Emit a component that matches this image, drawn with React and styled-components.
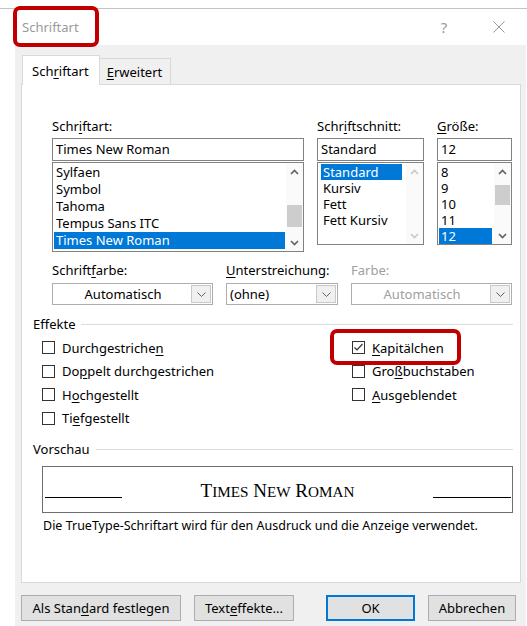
import React from 'react'
import styled, { createGlobalStyle, css } from 'styled-components'

const GlobalStyle = createGlobalStyle`
  html, body {
    margin: 0;
    padding: 0;
    background: #fff;
  }
  body {
    font-family: "Noto Sans", "Open Sans", sans-serif;
    font-size: 13px;
    color: #000;
  }
  #root {
    width: 527px;
    height: 626px;
    overflow: hidden;
  }
`

// red annotation frame drawn over a part of the dialog
const marker = css`
  &::after {
    content: '';
    position: absolute;
    box-sizing: border-box;
    border: 4px solid #c00000;
    border-radius: 7px;
    pointer-events: none;
  }
`

const Window = styled.div`
  margin-top: 8px;
  height: 618px;
  border-top: 1px solid #c4c4c4;
  display: flex;
  flex-direction: column;
`

const TitleBar = styled.div`
  height: 36px;
  display: flex;
  align-items: center;
  padding: 0 22px 0 22px;
  background: #fff;
`

const TitleText = styled.span`
  position: relative;
  flex: 1;
  color: #9a9a9a;
  line-height: 16px;
  ${marker}
  &::after {
    left: -9px;
    top: -13px;
    width: 86px;
    height: 41px;
  }
`

const TitleButton = styled.span`
  width: 12px;
  display: flex;
  justify-content: center;
  color: #9a9a9a;
  font-size: 15px;
  margin-left: ${p => p.$gap || 0}px;
`

const Body = styled.div`
  flex: 1;
  margin: 0 1px 0 15px;
  background: #f0f0f0;
  padding: 10px 5px 0 6px;
  display: flex;
  flex-direction: column;
`

const TabRow = styled.div`
  display: flex;
  align-items: flex-end;
  height: 30px;
  margin-bottom: -1px;
  padding-left: 1px;
`

const Tab = styled.div`
  position: relative;
  box-sizing: border-box;
  display: flex;
  align-items: center;
  border: 1px solid #d9d9d9;
  ${p => p.$active
    ? css`
      height: 30px;
      padding: 0 10px 0 9px;
      background: #fff;
      border-bottom: none;
      z-index: 1;
    `
    : css`
      height: 27px;
      padding: 0 8px 0 7px;
      background: #f0f0f0;
      border-left: none;
    `}
`

const Panel = styled.div`
  box-sizing: border-box;
  height: 499px;
  background: #fff;
  border: 1px solid #d9d9d9;
  padding: 0 7px 0 11px;
  display: flex;
  flex-direction: column;
`

const Acc = styled.span`
  text-decoration: underline;
  text-underline-offset: 2px;
  text-decoration-thickness: 1px;
`

const PickerGrid = styled.div`
  display: grid;
  grid-template-columns: 252px 107px 75px;
  column-gap: 13px;
  margin: 33px 0 0 19px;
  align-items: start;
`

const Field = styled.div`
  display: flex;
  flex-direction: column;
`

const Label = styled.div`
  line-height: 16px;
  margin-bottom: ${p => p.$gap ?? 4}px;
  color: ${p => (p.$disabled ? '#a0a0a0' : '#000')};
  white-space: nowrap;
`

const TextBox = styled.div`
  box-sizing: border-box;
  height: 23px;
  border: 1px solid #828282;
  background: #fff;
  padding: 0 3px;
  line-height: 21px;
`

const List = styled.div`
  box-sizing: border-box;
  margin-top: 1px;
  height: ${p => p.$height}px;
  border: 1px solid #828282;
  background: #fff;
  display: flex;
`

const Rows = styled.div`
  flex: 1;
  padding: 1px ${p => p.$inset[1]}px 0 ${p => p.$inset[0]}px;
  overflow: hidden;
`

const Row = styled.div`
  height: ${p => p.$h}px;
  line-height: ${p => p.$h}px;
  padding-left: 2px;
  white-space: nowrap;
  overflow: hidden;
  ${p => p.$selected && css`
    background: #0078d7;
    color: #fff;
  `}
`

const ScrollTrack = styled.div`
  width: 17px;
  background: #fafafa;
  display: flex;
  flex-direction: column;
`

const ArrowCell = styled.div`
  height: 17px;
  display: flex;
  align-items: center;
  justify-content: center;
  ${p => p.$end && 'margin-top: auto;'}
`

const Thumb = styled.div`
  margin: ${p => p.$offset}px 1px 0;
  height: ${p => p.$size}px;
  background: #cdcdcd;
`

const ComboGrid = styled.div`
  display: grid;
  grid-template-columns: 161px 112px 161px;
  column-gap: 13px;
  margin: 10px 0 0 19px;
`

const Combo = styled.div`
  box-sizing: border-box;
  height: 22px;
  border: 1px solid #adadad;
  background: #fff;
  display: flex;
  color: ${p => (p.$disabled ? '#a0a0a0' : '#000')};
`

const ComboValue = styled.div`
  flex: 1;
  line-height: 20px;
  text-align: ${p => (p.$center ? 'center' : 'left')};
  padding-left: 3px;
`

const ComboButton = styled.div`
  width: 18px;
  margin: 1px;
  border: 1px solid #c9c9c9;
  background: #f0f0f0;
  display: flex;
  align-items: center;
  justify-content: center;
`

const GroupTitle = styled.div`
  display: flex;
  align-items: center;
  gap: 6px;
  line-height: 16px;
  margin-top: ${p => p.$top}px;

  &::after {
    content: '';
    flex: 1;
    height: 1px;
    background: #dcdcdc;
  }
`

const CheckGrid = styled.div`
  display: grid;
  grid-template-columns: 310px auto;
  grid-template-rows: repeat(4, 23.5px);
  grid-auto-flow: column;
  margin: 4px 0 0 9px;
`

const CheckRow = styled.div`
  position: relative;
  display: flex;
  align-items: center;
  gap: 7px;
  ${p => p.$marked && css`
    ${marker}
    &::after {
      left: -22px;
      top: -7px;
      width: 131px;
      height: 36px;
    }
  `}
`

const Box = styled.span`
  box-sizing: border-box;
  width: 13px;
  height: 13px;
  border: 1px solid #333;
  background: #fff;
  display: flex;
`

const PreviewBox = styled.div`
  box-sizing: border-box;
  height: 47px;
  margin: 9px 0 0 9px;
  border: 1px solid #6e6e6e;
  display: flex;
  align-items: center;
  justify-content: space-between;
  padding: 0 1px 0 2px;
`

const PreviewLine = styled.span`
  width: ${p => p.$w}px;
  height: 1px;
  background: #000;
  margin-top: 16px;
`

const PreviewText = styled.span`
  font-family: "Liberation Serif", "Times New Roman", serif;
  font-size: 19px;
  margin-top: 2px;
`

// small capitals at 80% of the cap size
const SmallCaps = styled.span`
  font-size: 0.8em;
  text-transform: uppercase;
`

const Note = styled.div`
  margin: 5px 0 0 10px;
  font-size: 12.5px;
  line-height: 16px;
  white-space: nowrap;
`

const ButtonRow = styled.div`
  display: flex;
  gap: 13px;
  margin: 12px 5px 0 0;
`

const Button = styled.div`
  box-sizing: border-box;
  height: 26px;
  width: ${p => p.$w}px;
  display: flex;
  align-items: center;
  justify-content: center;
  background: #e1e1e1;
  border: 1px solid #adadad;
  ${p => p.$push && 'margin-left: auto;'}
  ${p => p.$default && css`
    border-color: #0078d7;
    box-shadow: inset 0 0 0 1px #0078d7;
  `}
`

function Chevron({ down, color = '#606060' }) {
  return (
    <svg width="9" height="6" viewBox="0 0 9 6">
      <polyline
        points={down ? '1,1 4.5,4.5 8,1' : '1,5 4.5,1.5 8,5'}
        fill="none"
        stroke={color}
        strokeWidth="1.6"
      />
    </svg>
  )
}

function ComboChevron() {
  return (
    <svg width="9" height="5" viewBox="0 0 9 5">
      <polyline points="0.5,0.5 4.5,4.5 8.5,0.5" fill="none" stroke="#606060" strokeWidth="1" />
    </svg>
  )
}

function CloseGlyph() {
  return (
    <svg width="12" height="12" viewBox="0 0 12 12">
      <path d="M0.5 0.5 L11.5 11.5 M11.5 0.5 L0.5 11.5" stroke="#9a9a9a" strokeWidth="1" />
    </svg>
  )
}

function CheckGlyph() {
  return (
    <svg width="11" height="11" viewBox="0 0 11 11">
      <polyline points="1.5,5.5 4,8 9.5,2" fill="none" stroke="#333" strokeWidth="1.2" />
    </svg>
  )
}

function ListBox({ items, selected, rowHeight, height, inset, thumb, disabled }) {
  const arrow = disabled ? '#c8c8c8' : '#606060'
  return (
    <List $height={height}>
      <Rows $inset={inset}>
        {items.map(item => (
          <Row key={item} $h={rowHeight} $selected={item === selected}>{item}</Row>
        ))}
      </Rows>
      <ScrollTrack>
        <ArrowCell><Chevron color={arrow} /></ArrowCell>
        {thumb && <Thumb $offset={thumb[0]} $size={thumb[1]} />}
        <ArrowCell $end><Chevron down color={arrow} /></ArrowCell>
      </ScrollTrack>
    </List>
  )
}

function Check({ checked, marked, children }) {
  return (
    <CheckRow $marked={marked}>
      <Box>{checked && <CheckGlyph />}</Box>
      <span>{children}</span>
    </CheckRow>
  )
}

export default function App() {
  return (
    <>
      <GlobalStyle />
      <Window>
        <TitleBar>
          <TitleText>Schriftart</TitleText>
          <TitleButton>?</TitleButton>
          <TitleButton $gap={43}><CloseGlyph /></TitleButton>
        </TitleBar>

        <Body>
          <TabRow>
            <Tab $active>Sch<Acc>r</Acc>iftart</Tab>
            <Tab><Acc>E</Acc>rweitert</Tab>
          </TabRow>

          <Panel>
            <PickerGrid>
              <Field>
                <Label>Schr<Acc>i</Acc>ftart:</Label>
                <TextBox>Times New Roman</TextBox>
                <ListBox
                  items={['Sylfaen', 'Symbol', 'Tahoma', 'Tempus Sans ITC', 'Times New Roman']}
                  selected="Times New Roman"
                  rowHeight={17}
                  height={90}
                  inset={[1, 1]}
                  thumb={[25, 22]}
                />
              </Field>
              <Field>
                <Label>Schr<Acc>i</Acc>ftschnitt:</Label>
                <TextBox>Standard</TextBox>
                <ListBox
                  items={['Standard', 'Kursiv', 'Fett', 'Fett Kursiv']}
                  selected="Standard"
                  rowHeight={16}
                  height={83}
                  inset={[3, 4]}
                  disabled
                />
              </Field>
              <Field>
                <Label><Acc>G</Acc>röße:</Label>
                <TextBox>12</TextBox>
                <ListBox
                  items={['8', '9', '10', '11', '12']}
                  selected="12"
                  rowHeight={16}
                  height={83}
                  inset={[1, 2]}
                  thumb={[5, 20]}
                />
              </Field>
            </PickerGrid>

            <ComboGrid>
              <Field>
                <Label $gap={5}>Schrift<Acc>f</Acc>arbe:</Label>
                <Combo>
                  <ComboValue $center>Automatisch</ComboValue>
                  <ComboButton><ComboChevron /></ComboButton>
                </Combo>
              </Field>
              <Field>
                <Label $gap={5}><Acc>U</Acc>nterstreichung:</Label>
                <Combo>
                  <ComboValue>(ohne)</ComboValue>
                  <ComboButton><ComboChevron /></ComboButton>
                </Combo>
              </Field>
              <Field>
                <Label $gap={5} $disabled>Farbe:</Label>
                <Combo $disabled>
                  <ComboValue $center>Automatisch</ComboValue>
                  <ComboButton><ComboChevron /></ComboButton>
                </Combo>
              </Field>
            </ComboGrid>

            <GroupTitle $top={11}>Effekte</GroupTitle>
            <CheckGrid>
              <Check>Durchgestriche<Acc>n</Acc></Check>
              <Check>Do<Acc>p</Acc>pelt durchgestrichen</Check>
              <Check>H<Acc>o</Acc>chgestellt</Check>
              <Check>Ti<Acc>e</Acc>fgestellt</Check>
              <Check checked marked><Acc>K</Acc>apitälchen</Check>
              <Check>Gro<Acc>ß</Acc>buchstaben</Check>
              <Check><Acc>A</Acc>usgeblendet</Check>
            </CheckGrid>

            <GroupTitle $top={11}>Vorschau</GroupTitle>
            <PreviewBox>
              <PreviewLine $w={77} />
              <PreviewText>
                T<SmallCaps>imes</SmallCaps> N<SmallCaps>ew</SmallCaps> R<SmallCaps>oman</SmallCaps>
              </PreviewText>
              <PreviewLine $w={78} />
            </PreviewBox>
            <Note>Die TrueType-Schriftart wird für den Ausdruck und die Anzeige verwendet.</Note>
          </Panel>

          <ButtonRow>
            <Button $w={160}>Als Stan<Acc>d</Acc>ard festlegen</Button>
            <Button $w={100}>Text<Acc>e</Acc>ffekte...</Button>
            <Button $w={89} $push $default>OK</Button>
            <Button $w={88}>Abbrechen</Button>
          </ButtonRow>
        </Body>
      </Window>
    </>
  )
}
